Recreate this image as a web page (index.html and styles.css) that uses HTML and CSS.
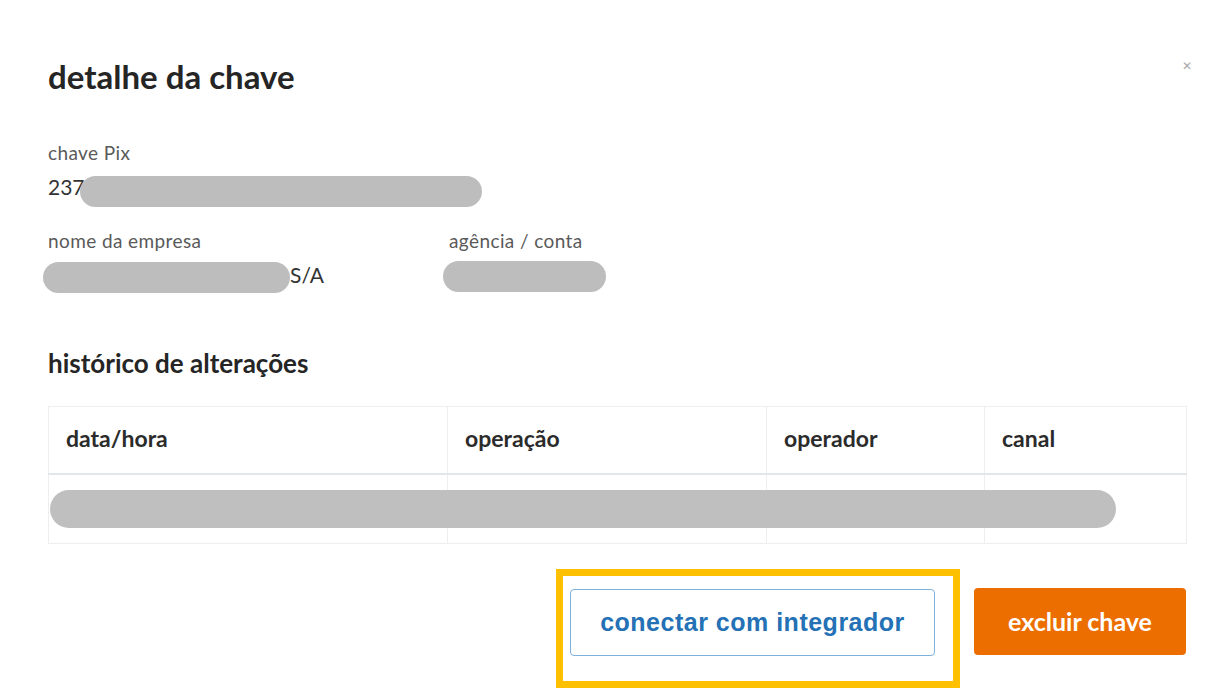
FILE: index.html
```html
<!DOCTYPE html>
<html lang="pt-BR">
<head>
<meta charset="utf-8">
<title>detalhe da chave</title>
<link rel="stylesheet" href="styles.css">
</head>
<body>
<div class="modal">
  <div class="header">
    <h1 class="title">detalhe da chave</h1>
    <button class="close" aria-label="fechar">&#x2715;</button>
  </div>

  <div class="field first">
    <div class="label">chave Pix</div>
    <div class="value">237<span class="redact r-key"></span></div>
  </div>

  <div class="row">
    <div class="field col1">
      <div class="label">nome da empresa</div>
      <div class="value"><span class="redact r-name"></span>S/A</div>
    </div>
    <div class="field">
      <div class="label">agência / conta</div>
      <div class="value"><span class="redact r-acc"></span></div>
    </div>
  </div>

  <h2 class="subtitle">histórico de alterações</h2>

  <div class="table-wrap">
    <table class="hist">
      <colgroup>
        <col class="c1"><col class="c2"><col class="c3"><col class="c4">
      </colgroup>
      <thead>
        <tr><th>data/hora</th><th>operação</th><th>operador</th><th>canal</th></tr>
      </thead>
      <tbody>
        <tr><td></td><td></td><td></td><td></td></tr>
      </tbody>
    </table>
    <span class="redact r-row"></span>
  </div>

  <div class="actions">
    <div class="highlight">
      <button class="btn-outline">conectar com integrador</button>
    </div>
    <button class="btn-primary">excluir chave</button>
  </div>
</div>
</body>
</html>
```

FILE: styles.css
```css
html, body {
  margin: 0;
  padding: 0;
  background: #ffffff;
}
body {
  font-family: Lato, "Noto Sans", sans-serif;
  color: #333333;
}
.modal {
  padding: 56px 30px 0 48px;
}
.header {
  display: flex;
  justify-content: space-between;
  align-items: flex-start;
  height: 40px;
}
.title {
  margin: 0;
  font-size: 33px;
  font-weight: 700;
  color: #252525;
  line-height: 40px;
}
.close {
  border: 0;
  background: none;
  color: #a9a9a9;
  font-size: 12px;
  padding: 0;
  margin-top: 3px;
  margin-right: -6px;
  cursor: pointer;
  font-family: "DejaVu Sans", sans-serif;
}
.field {
  display: flex;
  flex-direction: column;
}
.first {
  margin-top: 45px;
}
.label {
  font-size: 19px;
  letter-spacing: 0.4px;
  color: #5a5a5a;
  line-height: 24px;
}
.value {
  display: flex;
  align-items: flex-start;
  font-size: 21px;
  line-height: 28px;
  color: #333;
  height: 28px;
  margin-top: 8px;
}
.row {
  display: flex;
  margin-top: 28px;
}
.col1 {
  width: 401px;
}
.redact {
  display: inline-block;
  background: #bdbdbd;
  border-radius: 16px;
  flex: none;
}
.r-key {
  width: 402px;
  height: 31px;
  margin-left: -5px;
  margin-top: 3px;
}
.r-name {
  width: 247px;
  height: 31px;
  margin-left: -5px;
  margin-top: 1px;
}
.r-acc {
  width: 163px;
  height: 31px;
  margin-left: -6px;
  margin-top: 0;
}
.subtitle {
  margin: 54px 0 0 0;
  font-size: 26px;
  font-weight: 700;
  color: #252525;
  line-height: 40px;
}
.table-wrap {
  position: relative;
  margin-top: 23px;
}
.hist {
  width: 1138px;
  border-collapse: collapse;
  table-layout: fixed;
}
.c1 { width: 399px; }
.c2 { width: 319px; }
.c3 { width: 218px; }
.c4 { width: 202px; }
.hist th, .hist td {
  border: 1px solid #eceef0;
  text-align: left;
  padding: 0 17px;
}
.hist th {
  height: 61px;
  padding-bottom: 5px;
  font-size: 23px;
  font-weight: 700;
  color: #2b2b2b;
  border-bottom: 2px solid #e3e6e9;
}
.hist td {
  height: 68px;
}
.r-row {
  position: absolute;
  left: 2px;
  top: 84px;
  width: 1066px;
  height: 38px;
  border-radius: 19px;
  background: #bfbfbf;
}
.actions {
  display: flex;
  justify-content: flex-end;
  align-items: flex-start;
  margin-top: 25px;
  gap: 14px;
}
.highlight {
  border: 7px solid #ffc000;
  padding: 13px 18px 25px 7px;
  background: #fff;
}
.btn-outline {
  width: 365px;
  height: 67px;
  border: 1px solid #80b1dc;
  border-radius: 4px;
  background: #fff;
  color: #2471b6;
  font-family: "Liberation Sans", Arial, sans-serif;
  font-weight: 700;
  font-size: 25px;
  letter-spacing: 0.5px;
  padding-bottom: 2px;
  cursor: pointer;
}
.btn-primary {
  width: 212px;
  height: 67px;
  margin-top: 19px;
  border: 0;
  border-radius: 4px;
  background: #ec6e00;
  color: #fff;
  font-family: Lato, "Noto Sans", sans-serif;
  font-weight: 700;
  font-size: 25px;
  padding-bottom: 3px;
  cursor: pointer;
}
```
